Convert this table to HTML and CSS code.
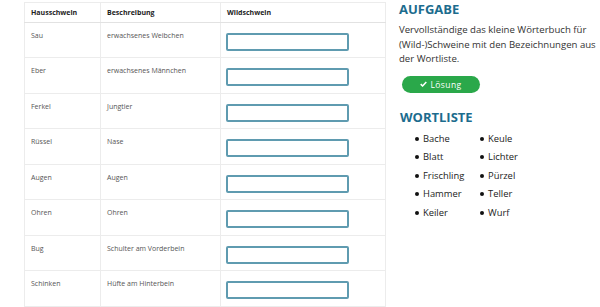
FILE: index.html
```html
<!DOCTYPE html>
<html lang="de">
<head>
<meta charset="utf-8">
<link rel="stylesheet" href="styles.css">
</head>
<body>
<div class="page">
  <table class="dict">
    <thead>
      <tr><th class="c1">Hausschwein</th><th class="c2">Beschreibung</th><th class="c3">Wildschwein</th></tr>
    </thead>
    <tbody>
      <tr><td>Sau</td><td>erwachsenes Weibchen</td><td><input type="text" class="field"></td></tr>
      <tr><td>Eber</td><td>erwachsenes Männchen</td><td><input type="text" class="field"></td></tr>
      <tr><td>Ferkel</td><td>Jungtier</td><td><input type="text" class="field"></td></tr>
      <tr><td>Rüssel</td><td>Nase</td><td><input type="text" class="field"></td></tr>
      <tr><td>Augen</td><td>Augen</td><td><input type="text" class="field"></td></tr>
      <tr><td>Ohren</td><td>Ohren</td><td><input type="text" class="field"></td></tr>
      <tr><td>Bug</td><td>Schulter am Vorderbein</td><td><input type="text" class="field"></td></tr>
      <tr><td>Schinken</td><td>Hüfte am Hinterbein</td><td><input type="text" class="field"></td></tr>
    </tbody>
  </table>
  <aside class="side">
    <h2 class="title">AUFGABE</h2>
    <p class="task">Vervollständige das kleine Wörterbuch für (Wild-)Schweine mit den Bezeichnungen aus der Wortliste.</p>
    <button class="solve"><svg class="check" viewBox="0 0 10 8" width="7" height="6"><path d="M1 4.2 L3.7 6.8 L9 1.2" fill="none" stroke="#fff" stroke-width="2.2"/></svg>Lösung</button>
    <h2 class="title list-title">WORTLISTE</h2>
    <ul class="words">
      <li>Bache</li><li>Blatt</li><li>Frischling</li><li>Hammer</li><li>Keiler</li>
      <li>Keule</li><li>Lichter</li><li>Pürzel</li><li>Teller</li><li>Wurf</li>
    </ul>
  </aside>
</div>
</body>
</html>
```

FILE: styles.css
```css
html, body {
  margin: 0;
  padding: 0;
  background: #fff;
}
body {
  font-family: "Open Sans", "DejaVu Sans", sans-serif;
  color: #333;
}
.page {
  display: flex;
  align-items: flex-start;
  padding: 2px 0 0 24px;
}
.dict {
  border-collapse: collapse;
  width: 361px;
  table-layout: fixed;
  font-size: 7px;
  color: #555;
  flex: none;
}
.dict th, .dict td {
  box-sizing: border-box;
  border: 1px solid #ececec;
  text-align: left;
  vertical-align: top;
  padding: 0 6px;
}
.dict th {
  height: 20px;
  vertical-align: middle;
  font-weight: 700;
  color: #222;
  border-bottom-color: #e2e2e2;
}
.dict .c1 { width: 76px; }
.dict .c2 { width: 120px; }
.dict .c3 { width: 165px; }
.dict td {
  height: 35.5px;
  padding-top: 8px;
  padding-bottom: 0;
  line-height: 10px;
}
.dict td:last-child { padding-left: 5px; }
.dict tbody tr:first-child td { height: 35px; }
.field {
  display: block;
  box-sizing: border-box;
  width: 123px;
  height: 18px;
  margin: 2px 0 0 0;
  border: 2px solid #5f9bb0;
  border-radius: 2px;
  background: #fff;
  padding: 0;
}
.side {
  margin-left: 12px;
  width: 203px;
  flex: none;
}
.title {
  margin: 0 0 0 1px;
  font-size: 13px;
  line-height: 15px;
  font-weight: 700;
  color: #1c6c8e;
}
.task {
  margin: 6px 0 0 1px;
  font-size: 9.6px;
  line-height: 14.5px;
  color: #333;
}
.solve {
  display: flex;
  align-items: center;
  justify-content: center;
  gap: 3px;
  margin: 9px 0 0 4px;
  width: 78px;
  height: 17px;
  border: none;
  border-radius: 9px;
  background: #2aa84a;
  color: #fff;
  font-family: "Open Sans", "DejaVu Sans", sans-serif;
  font-size: 8.5px;
  letter-spacing: 0.4px;
  padding: 0;
}
.check { display: block; }
.list-title {
  margin-top: 17px;
  margin-left: 2px;
}
.words {
  list-style: none;
  margin: 5px 0 0 0;
  padding: 0 0 0 17px;
  display: grid;
  grid-template-columns: 65px 65px;
  grid-template-rows: repeat(5, 18.5px);
  grid-auto-flow: column;
  font-size: 9.4px;
  line-height: 18.5px;
  color: #222;
}
.words li {
  display: flex;
  align-items: center;
}
.words li::before {
  content: "";
  width: 4px;
  height: 4px;
  border-radius: 50%;
  background: #111;
  margin-right: 4px;
  flex: none;
}
```
